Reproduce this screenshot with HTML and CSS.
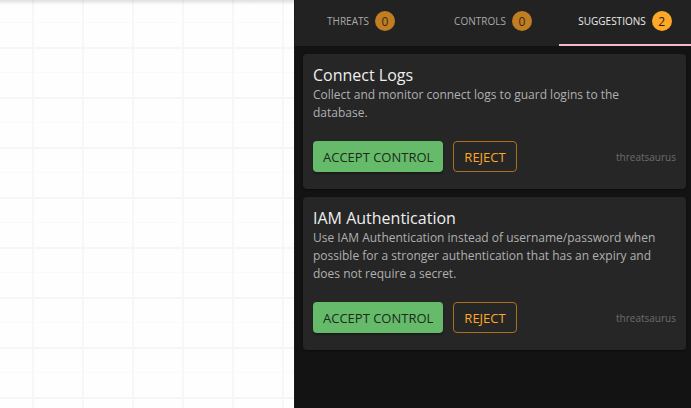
FILE: index.html
```html
<!DOCTYPE html>
<html>
<head>
<meta charset="utf-8">
<link rel="stylesheet" href="styles.css">
</head>
<body>
<div class="app">
  <div class="canvas"></div>
  <aside class="panel">
    <nav class="tabs">
      <div class="tab"><span class="tab-label">Threats</span><span class="badge">0</span></div>
      <div class="tab"><span class="tab-label">Controls</span><span class="badge">0</span></div>
      <div class="tab active"><span class="tab-label">Suggestions</span><span class="badge">2</span></div>
    </nav>
    <div class="list">
      <section class="card">
        <h2 class="card-title">Connect Logs</h2>
        <p class="card-desc">Collect and monitor connect logs to guard logins to the database.</p>
        <div class="card-actions">
          <button class="btn btn-accept">Accept Control</button>
          <button class="btn btn-reject">Reject</button>
          <span class="source">threatsaurus</span>
        </div>
      </section>
      <section class="card">
        <h2 class="card-title">IAM Authentication</h2>
        <p class="card-desc">Use IAM Authentication instead of username/password when possible for a stronger authentication that has an expiry and does not require a secret.</p>
        <div class="card-actions">
          <button class="btn btn-accept">Accept Control</button>
          <button class="btn btn-reject">Reject</button>
          <span class="source">threatsaurus</span>
        </div>
      </section>
    </div>
  </aside>
</div>
</body>
</html>
```

FILE: styles.css
```css
* { box-sizing: border-box; }
html, body { margin: 0; padding: 0; height: 100%; }
body {
  font-family: "Open Sans", "DejaVu Sans", sans-serif;
  background: #121212;
  overflow: hidden;
}
.app {
  display: flex;
  height: 408px;
}
.canvas {
  width: 294px;
  flex: none;
  background-color: #fefefe;
  background-image:
    linear-gradient(to bottom, rgba(0,0,0,0.12), rgba(0,0,0,0) 5px),
    repeating-linear-gradient(to right, transparent 0 32px, #f7f7f7 32px 34px, transparent 34px 50px),
    repeating-linear-gradient(to bottom, transparent 0 47px, #f6f6f6 47px 49px, transparent 49px 50px),
    repeating-linear-gradient(to bottom, transparent 0 22px, #fafafa 22px 23px, transparent 23px 25px);
}
.panel {
  flex: 1;
  display: flex;
  flex-direction: column;
  background: #131313;
  border-left: 1px solid #1a1a1a;
}
.tabs {
  display: flex;
  height: 46px;
  background: #222222;
  flex: none;
}
.tab {
  flex: 1;
  display: flex;
  align-items: center;
  justify-content: center;
  gap: 6px;
  padding-bottom: 2px;
  border-bottom: 2px solid transparent;
}
.tab.active { border-bottom-color: #f6b8c6; }
.tab-label {
  font-size: 10px;
  text-transform: uppercase;
  color: #a9a9a9;
}
.tab.active .tab-label { color: #ececec; }
.badge {
  width: 20px;
  height: 20px;
  border-radius: 50%;
  background: #c07d22;
  color: #3a2a10;
  font-size: 12px;
  display: flex;
  align-items: center;
  justify-content: center;
}
.tab.active .badge { background: #ffa726; color: #2a1c06; }
.list {
  display: flex;
  flex-direction: column;
  gap: 8px;
  padding: 8px 5px 8px 8px;
}
.card {
  background: #262626;
  border-radius: 4px;
  padding: 10px 10px 17px 10px;
  box-shadow: 0 1px 2px rgba(0,0,0,0.4);
}
.card-title {
  margin: 0;
  font-size: 16px;
  font-weight: 400;
  line-height: 22px;
  color: #eeeeee;
}
.card-desc {
  margin: 0;
  max-width: 350px;
  font-size: 12px;
  line-height: 18px;
  color: #b0b0b0;
}
.card-actions {
  display: flex;
  align-items: center;
  gap: 10px;
  margin-top: 19px;
}
.btn {
  font-family: inherit;
  font-size: 13px;
  text-transform: uppercase;
  height: 31px;
  padding: 0 10px;
  border-radius: 4px;
  cursor: pointer;
}
.btn-accept {
  background: #66bb6a;
  border: none;
  color: #1b2a1b;
  box-shadow: 0 2px 2px rgba(0,0,0,0.3);
}
.btn-reject {
  background: transparent;
  border: 1px solid #a8701f;
  color: #ffa726;
  padding: 0 10px;
}
.source {
  margin-left: auto;
  font-size: 10px;
  color: #6c6c6c;
}
```
